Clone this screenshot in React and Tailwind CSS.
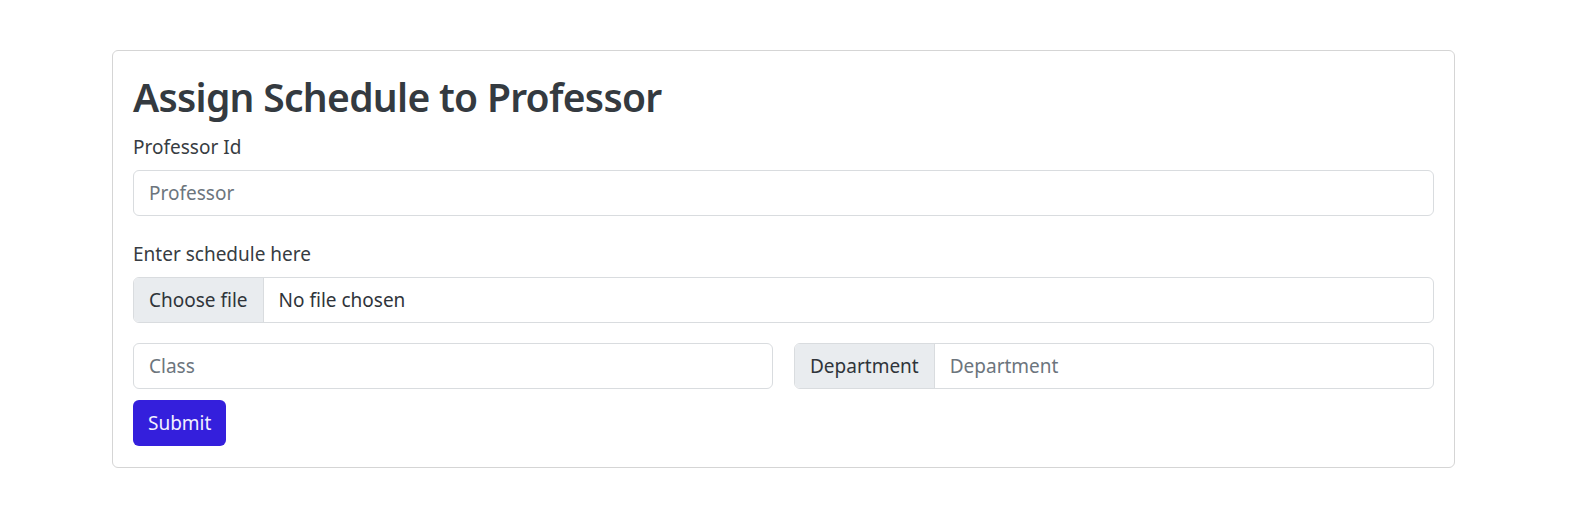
import React from 'react';

function App() {
  return (
    <div className="min-h-screen bg-white pt-[50px] font-['Noto_Sans',sans-serif] text-[19px] text-[#212529]">
      <div className="ml-[112px] w-[1343px] rounded-[6px] border border-[#d5d5d5] px-[20px] pb-[21px] pt-[22px]">
        <h1 className="mb-[12px] text-[39px] font-semibold leading-[48px] tracking-[-0.7px] text-[#343a40]">
          Assign Schedule to Professor
        </h1>

        <form onSubmit={(e) => e.preventDefault()}>
          {/* Professor id */}
          <div className="mb-[24px]">
            <label className="mb-[9px] block leading-[28px] text-[#373c42]">Professor Id</label>
            <input
              type="text"
              placeholder="Professor"
              className="block h-[46px] w-full rounded-[6px] border border-[#d9dcdf] px-[15px] text-[#212529] outline-none placeholder:text-[#6c757d]"
            />
          </div>

          {/* Schedule file */}
          <div className="mb-[20px]">
            <label className="mb-[9px] block leading-[28px] text-[#373c42]">Enter schedule here</label>
            <div className="flex h-[46px] w-full items-center overflow-hidden rounded-[6px] border border-[#d9dcdf]">
              <span className="flex h-full items-center border-r border-[#d9dcdf] bg-[#e9ecef] px-[15px] text-[#2f343a]">
                Choose file
              </span>
              <span className="px-[15px] text-[#2f343a]">No file chosen</span>
            </div>
          </div>

          {/* Class / Department */}
          <div className="mb-[11px] grid grid-cols-2 gap-[21px]">
            <input
              type="text"
              placeholder="Class"
              className="block h-[46px] w-full rounded-[6px] border border-[#d9dcdf] px-[15px] text-[#212529] outline-none placeholder:text-[#6c757d]"
            />
            <div className="flex h-[46px] w-full overflow-hidden rounded-[6px] border border-[#d9dcdf]">
              <span className="flex h-full items-center border-r border-[#d9dcdf] bg-[#e9ecef] px-[15px] text-[#2f343a]">
                Department
              </span>
              <input
                type="text"
                placeholder="Department"
                className="min-w-0 flex-1 px-[15px] text-[#212529] outline-none placeholder:text-[#6c757d]"
              />
            </div>
          </div>

          <button
            type="submit"
            className="h-[46px] rounded-[6px] bg-[#341fdc] px-[15px] text-[#f2f0ff]"
          >
            Submit
          </button>
        </form>
      </div>
    </div>
  );
}

export default App;
